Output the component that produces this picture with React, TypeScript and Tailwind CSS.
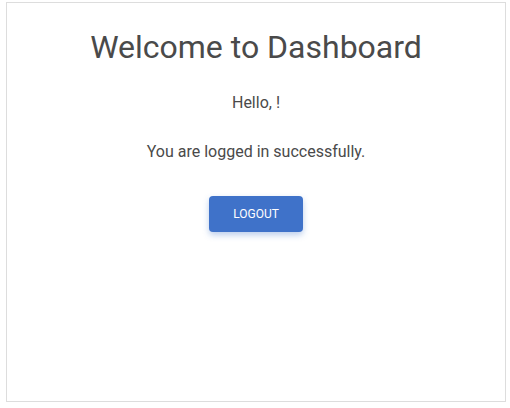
export default function App() {
  return (
    <div className="bg-white w-[510px] h-[408px] pt-[2px] pl-[6px]" style={{ fontFamily: 'Roboto, "Liberation Sans", sans-serif' }}>
      <div className="w-[500px] h-[400px] border border-[#dddddd] flex flex-col items-center text-[#4a4a4a]">
        <h1 className="mt-[24px] text-[32px] leading-[40px] font-normal">Welcome to Dashboard</h1>
        <p className="mt-[26px] text-[16px] leading-[20px]">Hello, !</p>
        <p className="mt-[29px] text-[16px] leading-[20px]">You are logged in successfully.</p>
        <button className="mt-[34px] w-[94px] h-[36px] rounded-[4px] bg-[#3f72c9] text-white text-[12px] font-normal shadow-[0_3px_6px_rgba(63,114,201,0.35)]">
          LOGOUT
        </button>
      </div>
    </div>
  );
}
